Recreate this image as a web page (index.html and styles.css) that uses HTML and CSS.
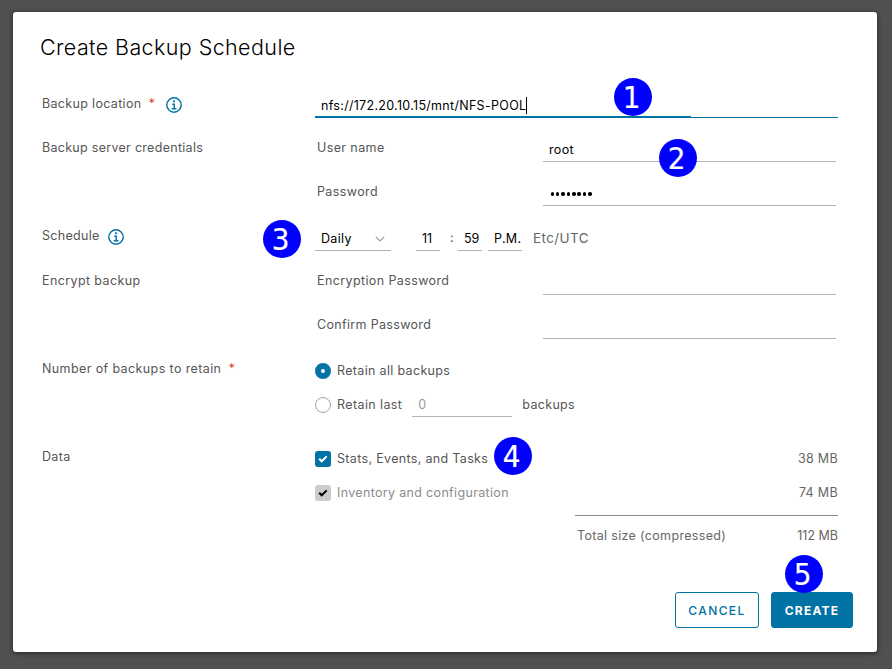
FILE: index.html
```html
<!DOCTYPE html>
<html lang="en">
<head>
<meta charset="utf-8">
<title>Create Backup Schedule</title>
<link rel="stylesheet" href="styles.css">
</head>
<body>
<main class="modal">
  <h1 class="title">Create Backup Schedule</h1>
  <form class="form">
    <section class="row">
      <div class="label"><span>Backup location</span><span class="req">*</span>
        <svg class="info" viewBox="0 0 16 16"><circle cx="8" cy="8" r="7.2"/><path d="M6.2 7.2h2v4.3M5.7 11.7h4.8"/><circle class="dot" cx="8" cy="4.3" r="1.1"/></svg>
      </div>
      <div class="location"><span>nfs://172.20.10.15/mnt/NFS-POOL</span><i class="caret"></i></div>
    </section>
    <section class="row">
      <div class="label"><span class="snug">Backup server credentials</span></div>
      <div class="fields">
        <div class="field"><span class="name loose">User name</span><div class="input">root</div></div>
        <div class="field"><span class="name loose">Password</span><div class="input dots"><i></i><i></i><i></i><i></i><i></i><i></i><i></i><i></i></div></div>
      </div>
    </section>
    <section class="row schedule-row">
      <div class="label"><span class="snug">Schedule</span>
        <svg class="info near" viewBox="0 0 16 16"><circle cx="8" cy="8" r="7.2"/><path d="M6.2 7.2h2v4.3M5.7 11.7h4.8"/><circle class="dot" cx="8" cy="4.3" r="1.1"/></svg>
      </div>
      <div class="schedule">
        <div class="select"><span>Daily</span><svg class="chev" viewBox="0 0 10 6"><path d="M.8.8 5 5 9.2.8"/></svg></div>
        <div class="time hour">11</div><span class="colon">:</span><div class="time minute">59</div><div class="time period">P.M.</div>
        <span class="zone">Etc/UTC</span>
      </div>
    </section>
    <section class="row">
      <div class="label"><span class="loose">Encrypt backup</span></div>
      <div class="fields">
        <div class="field"><span class="name loose">Encryption Password</span><div class="input"></div></div>
        <div class="field"><span class="name">Confirm Password</span><div class="input"></div></div>
      </div>
    </section>
    <section class="row">
      <div class="label"><span class="loose">Number of backups to retain</span><span class="req">*</span></div>
      <div class="options">
        <div class="option"><i class="radio on"></i><span>Retain all backups</span></div>
        <div class="option"><i class="radio"></i><span class="loose">Retain last</span><div class="count">0</div><span>backups</span></div>
      </div>
    </section>
    <section class="row">
      <div class="label"><span>Data</span></div>
      <div class="options data">
        <div class="option"><svg class="check" viewBox="0 0 16 16"><path d="m4.2 7.8 2.5 2.5 5-4.9"/></svg><span>Stats, Events, and Tasks</span><span class="size">38 MB</span></div>
        <div class="option off"><svg class="check" viewBox="0 0 16 16"><path d="m4.2 7.8 2.5 2.5 5-4.9"/></svg><span>Inventory and configuration</span><span class="size">74 MB</span></div>
        <div class="total"><span>Total size (compressed)</span><span class="size tight">112 MB</span></div>
      </div>
    </section>
  </form>
  <footer class="footer">
    <div class="btn"><span>CANCEL</span></div>
    <div class="btn primary"><span>CREATE</span></div>
  </footer>
</main>
<div class="badge b1">1</div>
<div class="badge b2">2</div>
<div class="badge b3">3</div>
<div class="badge b4">4</div>
<div class="badge b5">5</div>
</body>
</html>
```
FILE: styles.css
```css
* { box-sizing: border-box; }
body {
  position: relative;
  margin: 0;
  width: 892px;
  height: 669px;
  padding: 12px 15px 17px 13px;
  background: #505050;
  overflow: hidden;
  font: 12.5px/20px Inter, "Liberation Sans", sans-serif;
  letter-spacing: .33px;
  color: #565656;
  white-space: nowrap;
}
.loose { letter-spacing: .39px; }
.snug { letter-spacing: .29px; }
.tight { letter-spacing: 0; }
.modal {
  height: 640px;
  background: #fff;
  border-radius: 3px;
  box-shadow: 0 1px 4px 1px rgba(0, 0, 0, .4);
  display: flex;
  flex-direction: column;
}
.title {
  margin: 0;
  height: 70px;
  padding: 19px 0 0 27px;
  font-size: 21.5px;
  line-height: 32px;
  font-weight: 300;
  letter-spacing: .4px;
  color: #000;
}
.form { display: flex; flex-direction: column; }
.row { display: grid; grid-template-columns: 302px 523px; align-items: start; }
.label { height: 44px; padding: 0 0 1px 29px; display: flex; align-items: center; }
.req { color: #e02200; font-size: 13px; font-weight: 300; margin: -1px 0 0 7px; }
.info { width: 16px; height: 16px; margin: 3px 0 0 11px; fill: none; stroke: #0072a3; stroke-width: 1.4; }
.info.near { margin-left: 8px; }
.info .dot { fill: #0072a3; stroke: none; }
.location {
  height: 24px;
  margin-top: 12px;
  padding: 0 0 0 6px;
  display: flex;
  align-items: center;
  letter-spacing: .3px;
  color: #000;
  border-bottom: 1px solid #0072a3;
  background: linear-gradient(#0072a3, #0072a3) 0 100% / 376px 1px no-repeat;
}
.caret { width: 1px; height: 17px; background: #000; }
.field { height: 44px; display: grid; grid-template-columns: 228px 293px; }
.name { padding: 12px 0 0 2px; }
.input { height: 24px; margin-top: 12px; padding: 2px 0 0 6px; border-bottom: 1px solid #b3b3b3; color: #000; }
.dots { display: flex; align-items: center; gap: 1.9px; padding: 1px 0 0 7.5px; }
.dots i { width: 3.5px; height: 3.5px; border-radius: 50%; background: #000; }
.schedule-row { height: 45px; }
.schedule { display: flex; align-items: flex-start; padding-top: 13px; color: #000; }
.select { width: 76px; height: 24px; padding: 0 6px; display: flex; justify-content: space-between; align-items: center; border-bottom: 1px solid #b3b3b3; }
.chev { width: 10px; height: 6px; fill: none; stroke: #9a9a9a; stroke-width: 1.1; }
.time { height: 24px; padding: 2px 0 0 6px; border-bottom: 1px solid #b3b3b3; }
.hour { width: 24px; margin-left: 25px; letter-spacing: 0; }
.colon { width: 18px; padding: 1px 0 0 10px; color: #565656; }
.minute { width: 24px; letter-spacing: 0; }
.period { width: 34px; margin-left: 6px; }
.zone { margin: 1px 0 0 11px; font-size: 13.5px; letter-spacing: .4px; color: #666; }
.options { padding-top: 7px; height: 88px; }
.option { height: 34px; display: flex; align-items: center; }
.option > span { padding-bottom: 1px; }
.radio { width: 16px; height: 16px; margin-right: 6px; border: 1px solid #a3a3a3; border-radius: 50%; }
.radio.on { border: 6px solid #0072a3; }
.count { width: 100px; height: 24px; margin: 0 10px; padding: 2px 0 0 6px; border-bottom: 1px solid #b3b3b3; color: #999; }
.check { width: 16px; height: 16px; margin-right: 6px; border-radius: 3px; background: #0072a3; fill: none; stroke: #fff; stroke-width: 2; }
.off { color: #8c8c8c; }
.off .check { background: #ccc; stroke: #000; }
.size { margin-left: auto; color: #666; }
.data { height: 134px; }
.total { margin: 5px 0 0 260px; padding: 10px 0 0 2px; border-top: 1px solid #8c8c8c; display: flex; color: #666; }
.footer { margin: auto 24px 24px; display: flex; justify-content: flex-end; gap: 12px; }
.btn {
  width: 84px;
  height: 36px;
  padding-top: 2px;
  display: flex;
  align-items: center;
  justify-content: center;
  border: 1px solid #0072a3;
  border-radius: 3px;
  color: #0072a3;
  font-size: 12px;
  font-weight: 500;
  letter-spacing: 1.4px;
}
.primary { width: 82px; background: #0072a3; color: #fff; font-weight: 700; letter-spacing: 1.2px; }
.badge {
  position: absolute;
  width: 38px;
  height: 38px;
  padding-right: 3px;
  border-radius: 50%;
  background: #00f;
  color: #fff;
  font: 31px/38px "DejaVu Sans Condensed", "DejaVu Sans", sans-serif;
  -webkit-text-stroke: .2px #fff;
  letter-spacing: 0;
  text-align: center;
}
.b1 { left: 614px; top: 78px; }
.b2 { left: 659px; top: 139px; }
.b3 { left: 263px; top: 220px; }
.b4 { left: 494px; top: 437px; }
.b5 { left: 785px; top: 555px; }
```
